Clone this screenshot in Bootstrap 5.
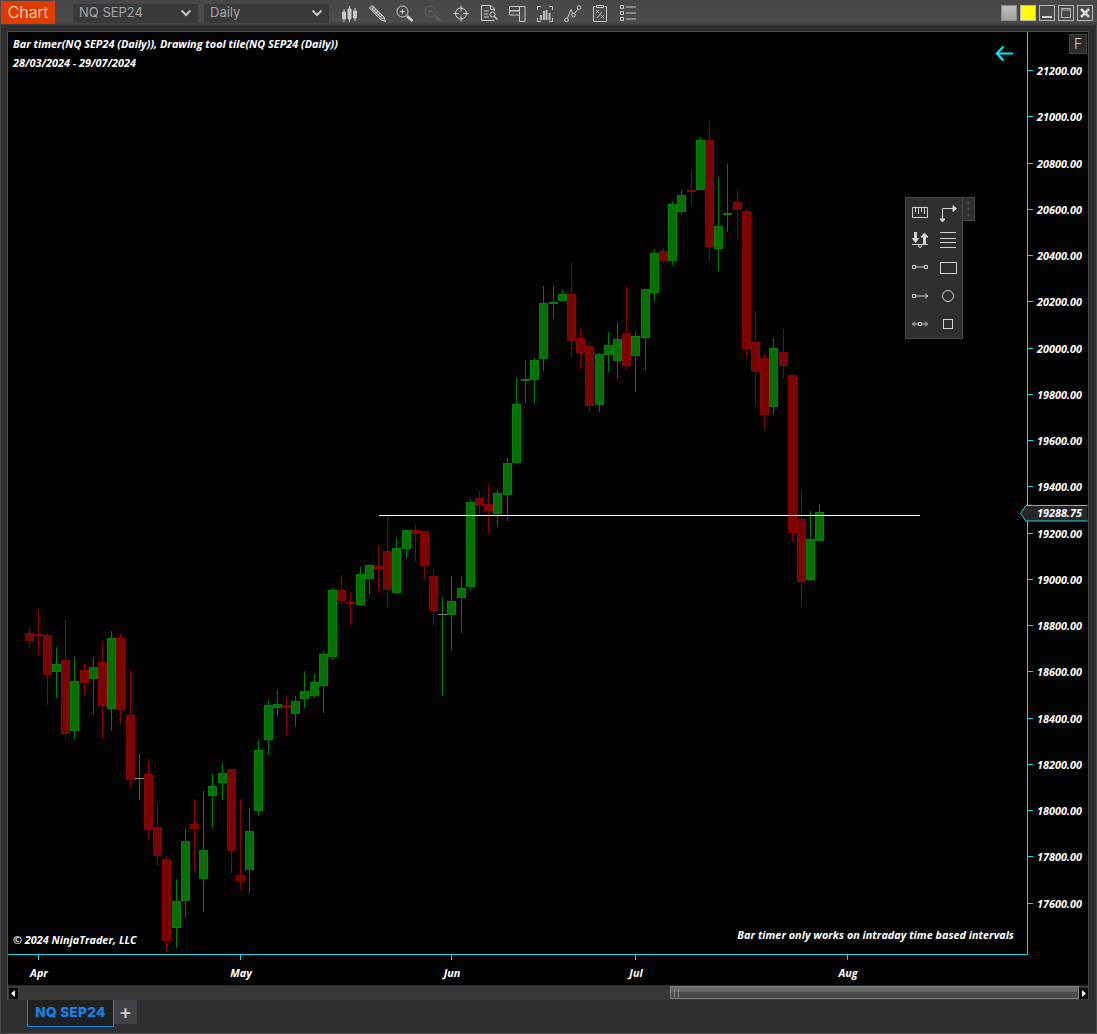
<!DOCTYPE html>
<html lang="en">
<head>
<meta charset="utf-8">
<title>Chart - NQ SEP24</title>
<link href="https://cdn.jsdelivr.net/npm/bootstrap@5.3.0/dist/css/bootstrap.min.css" rel="stylesheet">
<style>
html,body{height:100%;overflow:hidden;}
body{background:#2f2f31;color:#fff;font-family:Inter,"Noto Sans",sans-serif;box-shadow:inset 0 0 0 1px #4a4a4a;}
.win-bar{height:25px;background:linear-gradient(#474747,#4c4c4c 85%,#3f3f3f);padding:1px 4px 0 1px;}
.brand-tag{width:54px;height:23px;background:#e03c00;color:#ffe9dc;font-size:16px;line-height:23px;text-align:center;font-weight:300;margin-right:18px;}
.sym-box{width:125px;height:19px;background:#39393b;color:#a6a6a6;font-size:13px;padding:0 6px;margin-right:6px;}
.tool-set{margin-left:4px;gap:8px;}
.tool-set svg{width:20px;height:20px;display:block;}
.win-btns{gap:3px;}
.swatch{width:16px;height:16px;display:block;}
.swatch-gray{background:linear-gradient(#c0bebe,#a2a0a0);border:1px solid #8c8c8c;}
.swatch-yellow{background:#ffff00;border:1px solid #b5b5b5;}
.win-btns svg{width:16px;height:16px;display:block;}
.chart-frame{margin:6px 8px 0 7px;border:1px solid #4f4f4f;border-bottom:0;border-right-color:#444;height:969px;}
.chart-pane{height:953px;background:#030303;position:relative;}
.chart-svg{display:block;width:1080px;height:953px;}
.t-lab{font-family:"Open Sans","Noto Sans",sans-serif;font-style:italic;font-weight:700;font-size:10.85px;fill:#fff;}
.draw-panel{position:absolute;left:897px;top:165px;width:70px;height:142px;}
.draw-panel svg{display:block;width:70px;height:142px;}
.scroll-row{height:15px;background:#393939;border-top:1px solid #2b2b2b;padding:2px 0 0 1px;}
.arrow-btn{width:9px;height:11px;background:#000;display:flex;align-items:center;justify-content:center;}
.scroll-track{flex:1;}
.scroll-thumb{width:409px;height:13px;margin-top:-2px;margin-left:auto;border:1px solid #7d7d7d;background:linear-gradient(#6c6c6c,#636363 45%,#4a4a4a 50%,#4a4a4a);position:relative;}
.thumb-grip{position:absolute;left:3px;top:2px;width:5px;height:8px;border-left:1px solid #888;border-right:1px solid #888;}
.tab-strip{padding-left:27px;height:27px;}
.tab-on{width:87px;height:27px;background:#202022;border:1px solid #1a86e0;border-top:0;color:#1585e8;font-weight:800;font-size:13.5px;line-height:25px;text-align:center;letter-spacing:.35px;white-space:nowrap;}
.tab-add{width:23px;height:24px;background:#434347;color:#cfcfcf;font-size:20px;line-height:22px;text-align:center;font-weight:500;padding:0;border:0;border-radius:0;}
</style>
</head>
<body>
<header class="win-bar d-flex align-items-start">
  <div class="brand-tag">Chart</div>
  <div class="sym-box d-flex align-items-center justify-content-between mt-auto mb-auto"><span>NQ SEP24</span><svg width="12" height="8" viewBox="0 0 12 8"><path d="M1.5 1.5L6 6l4.5-4.5" fill="none" stroke="#c4c4c4" stroke-width="2"/></svg></div>
  <div class="sym-box d-flex align-items-center justify-content-between mt-auto mb-auto"><span>Daily</span><svg width="12" height="8" viewBox="0 0 12 8"><path d="M1.5 1.5L6 6l4.5-4.5" fill="none" stroke="#c4c4c4" stroke-width="2"/></svg></div>
  <div class="tool-set d-flex align-items-center mt-auto mb-auto">
    <svg viewBox="0 0 20 20" fill="none" stroke="#c8c8c8"><path d="M5 6v13M10.5 3v16M16 5v13" /><path d="M3.5 9h3v7h-3zM9 6h3v10H9zM14.5 8h3v7h-3z" fill="#c8c8c8"/></svg>
    <svg viewBox="0 0 20 20" fill="none" stroke="#d0d0d0"><path d="M2.5 5L5 2.5l12 11.5 1.5 4.5-4.5-1.500z" fill="#777"/><path d="M5 5.500l10 10M7 3.500L5 6M9 6L7 8M11 8L9 10M13 10l-2 2M15 12l-2 2" stroke-width="1"/></svg>
    <svg viewBox="0 0 20 20" fill="none" stroke="#d0d0d0"><circle cx="7.500" cy="8.500" r="5.500"/><path d="M5 8.500h5M7.500 6v5"/><path d="M12 13l5.500 5" stroke-width="2.600"/></svg>
    <svg viewBox="0 0 20 20" fill="none" stroke="#5f5f5f"><circle cx="7.500" cy="8.500" r="5.500"/><path d="M5 8.500h5"/><path d="M12 13l5.500 5" stroke-width="2.600"/></svg>
    <svg viewBox="0 0 20 20" fill="none" stroke="#d0d0d0"><circle cx="10" cy="10.500" r="5.500"/><path d="M10 2.500v6M10 12.500v6M2 10.500h6M12 10.500h6" /></svg>
    <svg viewBox="0 0 20 20" fill="none" stroke="#c8c8c8"><path d="M15.500 8V6L12 2.500H2.500v15h13"/><path d="M11.500 3v3.500h4M5 8h5M5 11h4M5 14h5"/><circle cx="13.500" cy="11.500" r="2.500"/><path d="M15.500 13.500l3 3" stroke-width="1.500"/></svg>
    <svg viewBox="0 0 20 20" fill="none" stroke="#c8c8c8"><path d="M2.500 3.500h10v4h-10zM2.500 8h10v4h-10zM12.500 3.500h5.500v15h-5.500z"/></svg>
    <svg viewBox="0 0 20 20" fill="none" stroke="#c8c8c8"><path d="M2.500 7V3.500H6M14 3.500h3.500V7M2.500 15v3.500H6M14 18.500h3.500V15"/><path d="M6 17v-5M9 17V8M11.500 17V7M14.500 17v-7" stroke-width="1.800"/></svg>
    <svg viewBox="0 0 20 20" fill="none" stroke="#c8c8c8"><circle cx="3.500" cy="17" r="1.800"/><circle cx="10.500" cy="12" r="1.800"/><circle cx="16" cy="4.500" r="1.800"/><path d="M4.300 15.500L8 6.500l1.700 4M11.500 10.500L15 6"/></svg>
    <svg viewBox="0 0 20 20" fill="none" stroke="#c8c8c8"><path d="M4.500 3.500h-2v15h13v-15h-2M5.500 2.500h7v2h-7z"/><path d="M5 7l3 3M8 7l-3 3M10 12l3 3M13 12l-3 3M6 15l5-6" stroke-width=".9"/></svg>
    <svg viewBox="0 0 20 20" fill="none" stroke="#c8c8c8"><path d="M1.500 2.500h3v3h-3zM1.500 8.500h3v3h-3zM1.500 14.500h3v3h-3zM7 4h10M7 10h10M7 16h10"/></svg>
  </div>
  <div class="win-btns d-flex ms-auto mt-1">
    <span class="swatch swatch-gray"></span>
    <span class="swatch swatch-yellow"></span>
    <svg viewBox="0 0 16 16" fill="none" stroke="#b5b5b5"><rect x=".5" y=".5" width="15" height="15"/><path d="M3 12h10" stroke="#d0d0d0" stroke-width="2"/></svg>
    <svg viewBox="0 0 16 16" fill="none" stroke="#b5b5b5"><rect x=".5" y=".5" width="15" height="15"/><path d="M3.500 3.500h9v9h-9zM3.500 5h9" /></svg>
    <svg viewBox="0 0 16 16" fill="none" stroke="#b5b5b5"><rect x=".5" y=".5" width="15" height="15"/><path d="M4 4l8 8M12 4l-8 8" stroke="#d8d8d8" stroke-width="2.500"/></svg>
  </div>
</header>
<main class="chart-frame">
  <div class="chart-pane">
    <svg class="chart-svg" id="chart" viewBox="8 32 1080 953" xmlns="http://www.w3.org/2000/svg">
      <g id="candles"></g>
      <rect x="379" y="515" width="541" height="1" fill="#fff"/>
      <path d="M1027.500 32v922.500H8" fill="none" stroke="#22d8dc"/>
      <g id="ticks" stroke="#22d8dc"></g>
      <g id="labels"></g>
      <text class="t-lab" x="13" y="48">Bar timer(NQ SEP24 (Daily)), Drawing tool tile(NQ SEP24 (Daily))</text>
      <text class="t-lab" x="13" y="67">28/03/2024 - 29/07/2024</text>
      <text class="t-lab" x="13" y="944">© 2024 NinjaTrader, LLC</text>
      <text class="t-lab" x="1014" y="939" text-anchor="end">Bar timer only works on intraday time based intervals</text>
      <path d="M1013 53.500H997M1003.500 46.500l-6.800 7 6.800 7" fill="none" stroke="#00f0f8" stroke-width="2"/>
      <rect x="1069.500" y="34.500" width="17" height="19" fill="#2b2b2d" stroke="#444"/>
      <text x="1078" y="49" text-anchor="middle" font-family="Inter,sans-serif" font-size="14" font-weight="300" fill="#d8d8d8">F</text>
      <path d="M1087.500 505.500H1026l-5.500 8 5.500 7.500h61.500" fill="#262628" stroke="#22d8dc"/>
      <text class="t-lab" x="1037" y="517">19288.75</text>
    </svg>
    <div class="draw-panel">
      <svg viewBox="905 197 70 142" fill="none" stroke="#d2d2d2" xmlns="http://www.w3.org/2000/svg"></svg>
    </div>
  </div>
  <div class="scroll-row d-flex">
    <div class="arrow-btn"><svg width="5" height="7" viewBox="0 0 5 7"><path d="M4 0v7L0 3.500z" fill="#fff"/></svg></div>
    <div class="scroll-track"><div class="scroll-thumb"><span class="thumb-grip"></span></div></div>
    <div class="arrow-btn"><svg width="5" height="7" viewBox="0 0 5 7"><path d="M1 0v7l4-3.500z" fill="#fff"/></svg></div>
  </div>
</main>
<nav class="tab-strip d-flex align-items-start">
  <div class="tab-on">NQ SEP24</div>
  <button type="button" class="btn tab-add">+</button>
</nav>
<script>
// [x, kind, wickTop, wickBottom, bodyTop, bodyBottom]; kind: r red, g green
const D=[
[29,'r',627,648,633,641],[38,'r',610,655,634,636],[47,'r',633,705,635,675],[56,'g',647,698,664,672],[65,'r',620,739,660,734],[74,'g',657,739,681,731],[84,'r',664,696,670,683],[93,'g',657,714,667,679],[102,'r',642,739,662,706],[111,'g',631,731,638,709],[120,'r',634,724,638,710],[130,'r',670,788,715,780],[139,'x',754,800,778,779],[148,'r',759,840,774,830],[157,'r',804,866,827,856],[166,'r',855,952,859,941],[176,'g',879,948,901,928],[185,'g',829,917,841,901],[194,'r',799,871,824,829],[203,'g',791,912,850,879],[212,'g',774,828,786,796],[222,'g',763,800,773,783],[231,'r',769,873,769,851],[240,'r',799,890,875,881],[249,'g',808,893,831,870],[258,'g',740,816,750,811],[268,'g',700,755,705,740],[277,'g',690,716,704,708],[286,'r',695,735,705,708],[295,'g',696,727,701,714],
[304,'g',671,708,691,699],[314,'g',674,698,682,696],[323,'g',651,713,654,686],[332,'g',588,660,590,657],[341,'r',575,605,590,601],[350,'r',592,625,602,604],[360,'g',567,605,574,605],[369,'g',564,594,565,579],[378,'r',545,593,566,569],[387,'r',515,608,551,590],[396,'g',537,594,548,593],[406,'g',530,558,530,549],[415,'r',524,562,530,534],[424,'r',531,580,531,566],[433,'r',569,625,576,611],[442,'x',597,696,614,615],[451,'g',576,651,601,615],[461,'g',577,633,588,598],[470,'g',499,590,502,587],[479,'r',491,515,498,506],[488,'r',484,534,504,511],[497,'g',490,526,493,514],[507,'g',458,521,463,495],[516,'g',378,464,404,463],[525,'g',360,404,379,381],[534,'g',358,404,360,380],[543,'g',286,371,303,359],[553,'g',286,319,302,304],[562,'g',290,302,294,301],[571,'r',263,358,294,341],[580,'r',329,369,338,353],[589,'r',342,412,346,406],[599,'g',353,412,354,405],[608,'g',332,372,345,355],[617,'g',322,378,339,361],[626,'r',286,370,333,366],[635,'g',332,392,336,356],[645,'g',289,370,289,338],[654,'g',249,301,253,293],[663,'r',248,263,251,261],[672,'g',201,265,204,261],[681,'g',190,215,195,212],[691,'r',170,206,190,192],[700,'g',137,190,140,190],[709,'r',121,261,140,247],[718,'g',177,271,226,249],[727,'g',164,232,213,215],[737,'r',190,241,202,210],[746,'r',210,357,211,349],[755,'r',311,405,342,372],[764,'r',353,429,358,415],[773,'g',338,414,348,407],[783,'r',329,379,352,366],[792,'r',375,541,375,533],[801,'r',490,607,519,582],[810,'g',511,581,539,580],[819,'g',504,541,512,541]];
const NS='http://www.w3.org/2000/svg';
function el(p,n,a,t){const e=document.createElementNS(NS,n);for(const k in a)e.setAttribute(k,a[k]);if(t)e.textContent=t;p.appendChild(e);return e;}
const C={r:['#8b0000','#7b0505','#8a0303'],g:['#008000','#067006','#078007'],x:['#008000','#8a8a8a','#8a8a8a']};
const cg=document.getElementById('candles');
D.forEach(([x,k,wt,wb,bt,bb])=>{
  const c=C[k];
  el(cg,'rect',{x:x,y:wt,width:1,height:wb-wt,fill:c[0]});
  if(k==='x'){el(cg,'rect',{x:x-4,y:bt,width:9,height:1,fill:c[1]});return;}
  if(bb-bt<=2){el(cg,'rect',{x:x-4,y:bt,width:9,height:2,fill:c[2]});return;}
  el(cg,'rect',{x:x-3.5,y:bt+.5,width:8,height:bb-bt-1,fill:c[1],stroke:c[2]});
});
const tk=document.getElementById('ticks'),lb=document.getElementById('labels');
for(let p=21200;p>=17600;p-=200){
  const y=Math.round(70+(21200-p)*0.2313);
  el(tk,'path',{d:`M1028 ${y+.5}h5`});
  el(lb,'text',{class:'t-lab',x:1037,y:y+5},p.toFixed(2));
}
[['Apr',38],['May',240],['Jun',451],['Jul',635],['Aug',847]].forEach(([t,x])=>{
  el(tk,'path',{d:`M${x+.5} 955v5`});
  el(lb,'text',{class:'t-lab',x:x+1,y:977,'text-anchor':'middle'},t);
});
document.querySelector('.draw-panel svg').innerHTML=`
<rect x="905.500" y="197.500" width="57" height="141" fill="#2f2f31" stroke="#4a4a4a"/>
<rect x="962.500" y="197.500" width="12" height="23" fill="#2f2f31" stroke="#4a4a4a"/>
<g fill="#4c4c4c" stroke="none"><circle cx="968.500" cy="202.500" r="1.500"/><circle cx="968.500" cy="209" r="1.500"/><circle cx="968.500" cy="215" r="1.500"/></g>
<path d="M912.500 207.500h15v10h-15zM915.500 208v4M918.500 208v6M921.500 208v4M924.500 208v6"/>
<path d="M942.500 219v-10.500h13"/><path d="M953 205.500l3.500 3-3.500 3z" fill="#d2d2d2"/><path d="M940 219l2.500 3 2.500-3z" fill="#d2d2d2"/>
<path d="M912 244.500h16"/><path d="M915.500 232v7M924.500 245v-8" stroke-width="3"/><path d="M912.500 238.500h6l-3 4zM921 237l3.500-4 3.500 4z" fill="#d2d2d2"/><circle cx="920" cy="246" r="1.500"/>
<path d="M940 232.500h16M940 238.500h16M940 242.500h16M940 247.500h16"/>
<path d="M912.500 265.500h3v3h-3zM924.500 265.500h3v3h-3zM915.500 267h9"/>
<rect x="940.500" y="262.500" width="16" height="11"/>
<path d="M912.500 294.500h3v3h-3zM915.500 296h12M925 293.500l3 2.500-3 2.500"/>
<circle cx="948" cy="296" r="5.500"/>
<path d="M918.500 322.500h3v3h-3zM912.500 324h6M921.500 324h6M915 321.500l-2.500 2.500 2.500 2.500M925 321.500l2.500 2.500-2.500 2.500"/>
<rect x="943.500" y="319.500" width="9" height="9"/>`;
</script>
<script src="https://cdn.jsdelivr.net/npm/bootstrap@5.3.0/dist/js/bootstrap.bundle.min.js"></script>
</body>
</html>
